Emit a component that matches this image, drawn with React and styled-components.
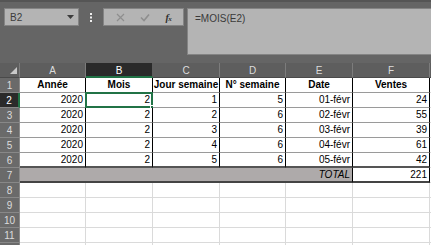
import React from "react";
import styled, { createGlobalStyle } from "styled-components";

const GlobalStyle = createGlobalStyle`
  html, body { margin: 0; padding: 0; background: #ffffff; overflow: hidden; }
  body { font-family: "Liberation Sans", Arial, sans-serif; }
  * { box-sizing: border-box; }
`;

const Page = styled.div`
  width: 431px;
  height: 245px;
  overflow: hidden;
  display: flex;
  flex-direction: column;
`;

const Toolbar = styled.div`
  height: 63px;
  flex: none;
  background: #656565;
  border-top: 2px solid #555555;
  display: flex;
  align-items: flex-start;
  padding: 6px 0 0 4px;
`;

const NameBox = styled.div`
  width: 75px;
  height: 18px;
  background: #b4b4b4;
  border: 1px solid #848484;
  display: flex;
  align-items: center;
  justify-content: space-between;
  padding: 0 4px 0 5px;
  font-size: 10px;
  color: #3c3c3c;
`;

const Dots = styled.div`
  width: 24px;
  height: 18px;
  display: flex;
  align-items: center;
  justify-content: center;
`;

const FxGroup = styled.div`
  width: 81px;
  height: 18px;
  background: #b4b4b4;
  border: 1px solid #848484;
  display: flex;
  align-items: center;
  justify-content: space-around;
  padding: 0 4px;
`;

const FxLabel = styled.span`
  font-family: "Liberation Serif", "Times New Roman", serif;
  font-style: italic;
  font-weight: bold;
  font-size: 10px;
  color: #2e2e2e;
  letter-spacing: -0.5px;
`;

const FxSub = styled.span`
  font-size: 7px;
`;

const FormulaInput = styled.div`
  margin-left: 3px;
  flex: 1;
  height: 47px;
  background: #b4b4b4;
  border: 1px solid #848484;
  border-right: none;
  font-size: 10px;
  color: #3a3a3a;
  padding: 4px 0 0 7px;
`;

const Sheet = styled.div`
  display: grid;
  grid-template-columns: 20px 66px 67px 67px 66px 67px 77px 20px;
  grid-auto-rows: 15px;
  font-size: 10px;
  color: #000;
`;

const Corner = styled.div`
  background: #5e5e5e;
  border-right: 1px solid #7c7c7c;
  border-bottom: 1px solid #4a4a4a;
  display: flex;
  align-items: flex-end;
  justify-content: flex-end;
  padding: 0 2px 3px 0;
`;

const ColHeader = styled.div`
  background: ${(p) => (p.$active ? "#2a2a2a" : "#5e5e5e")};
  color: ${(p) => (p.$active ? "#ffffff" : "#dcdcdc")};
  border-right: 1px solid ${(p) => (p.$active ? "#5e5e5e" : "#7c7c7c")};
  border-bottom: ${(p) => (p.$active ? "2px solid #217346" : "1px solid #4a4a4a")};
  display: flex;
  align-items: center;
  justify-content: center;
  font-size: 10px;
  padding-top: ${(p) => (p.$active ? "1px" : "0")};
`;

const RowHeader = styled.div`
  background: ${(p) => (p.$active ? "#2a2a2a" : "#6a6a6a")};
  color: ${(p) => (p.$active ? "#ffffff" : "#dcdcdc")};
  border-right: ${(p) => (p.$active ? "2px solid #217346" : "1px solid #8a8a8a")};
  border-bottom: 1px solid #888888;
  display: flex;
  align-items: center;
  justify-content: center;
  font-size: 10px;
`;

const Cell = styled.div`
  position: relative;
  grid-column: ${(p) => (p.$span ? `span ${p.$span}` : "auto")};
  background: ${(p) => p.$fill || "#ffffff"};
  border-right: 1px solid ${(p) => p.$v || "#dadada"};
  border-bottom: ${(p) => p.$hw || 1}px solid ${(p) => p.$h || "#dadada"};
  display: flex;
  align-items: center;
  justify-content: ${(p) =>
    p.$align === "center" ? "center" : p.$align === "right" ? "flex-end" : "flex-start"};
  padding: 0 2px;
  font-weight: ${(p) => (p.$bold ? "bold" : "normal")};
  font-style: ${(p) => (p.$italic ? "italic" : "normal")};
  white-space: nowrap;
  line-height: 1;
`;

const Selection = styled.div`
  position: absolute;
  left: -1px;
  top: -1px;
  right: -1px;
  bottom: -1px;
  border: 2px solid #217346;
  pointer-events: none;
`;

const FillHandle = styled.div`
  position: absolute;
  right: -4px;
  bottom: -4px;
  width: 5px;
  height: 5px;
  background: #217346;
  border: 1px solid #ffffff;
`;

const headers = ["Année", "Mois", "Jour semaine", "N° semaine", "Date", "Ventes"];
const data = [
  [2020, 2, 1, 5, "01-févr", 24],
  [2020, 2, 2, 6, "02-févr", 55],
  [2020, 2, 3, 6, "03-févr", 39],
  [2020, 2, 4, 6, "04-févr", 61],
  [2020, 2, 5, 6, "05-févr", 42],
];
const cols = ["A", "B", "C", "D", "E", "F"];

export default function App() {
  const rows = [];

  rows.push(
    <Corner key="corner">
      <svg width="7" height="7" viewBox="0 0 7 7">
        <polygon points="7,0 7,7 0,7" fill="#c9c9c9" />
      </svg>
    </Corner>
  );
  cols.forEach((c) =>
    rows.push(
      <ColHeader key={"h" + c} $active={c === "B"}>
        {c}
      </ColHeader>
    )
  );
  rows.push(<ColHeader key="hG" />);

  rows.push(<RowHeader key="r1">1</RowHeader>);
  headers.forEach((h, i) =>
    rows.push(
      <Cell key={"c1" + i} $align="center" $bold $v="#000" $h="#9a9a9a">
        {h}
      </Cell>
    )
  );
  rows.push(<Cell key="c1g" />);

  data.forEach((r, ri) => {
    const n = ri + 2;
    rows.push(
      <RowHeader key={"r" + n} $active={n === 2}>
        {n}
      </RowHeader>
    );
    r.forEach((v, ci) =>
      rows.push(
        <Cell
          key={`c${n}-${ci}`}
          $align="right"
          $v="#000"
          $h={n === 6 ? "#555" : "#9a9a9a"}
          $hw={n === 6 ? 2 : 1}
        >
          {v}
          {n === 2 && ci === 1 && (
            <Selection>
              <FillHandle />
            </Selection>
          )}
        </Cell>
      )
    );
    rows.push(<Cell key={`c${n}g`} />);
  });

  rows.push(<RowHeader key="r7">7</RowHeader>);
  rows.push(
    <Cell key="c7t" $span={5} $fill="#aeaaaa" $align="right" $italic $v="#000" $h="#444" $hw={2}>
      TOTAL
    </Cell>
  );
  rows.push(
    <Cell key="c7v" $align="right" $v="#000" $h="#444" $hw={2}>
      221
    </Cell>
  );
  rows.push(<Cell key="c7g" />);

  for (let n = 8; n <= 12; n++) {
    rows.push(<RowHeader key={"r" + n}>{n <= 11 ? n : ""}</RowHeader>);
    for (let c = 0; c < 7; c++) rows.push(<Cell key={`c${n}-${c}`} />);
  }

  return (
    <Page>
      <GlobalStyle />
      <Toolbar>
        <NameBox>
          <span>B2</span>
          <svg width="7" height="4" viewBox="0 0 7 4">
            <polygon points="0,0 7,0 3.5,4" fill="#3c3c3c" />
          </svg>
        </NameBox>
        <Dots>
          <svg width="2" height="9" viewBox="0 0 2 9">
            <rect x="0" y="0" width="2" height="2" fill="#eeeeee" />
            <rect x="0" y="3.5" width="2" height="2" fill="#eeeeee" />
            <rect x="0" y="7" width="2" height="2" fill="#eeeeee" />
          </svg>
        </Dots>
        <FxGroup>
          <svg width="9" height="9" viewBox="0 0 9 9">
            <path d="M1 1 L8 8 M8 1 L1 8" stroke="#8e8e8e" strokeWidth="1.2" />
          </svg>
          <svg width="10" height="9" viewBox="0 0 10 9">
            <path d="M1 4.5 L4 7.5 L9 1.5" stroke="#8e8e8e" strokeWidth="1.6" fill="none" />
          </svg>
          <FxLabel>
            f<FxSub>x</FxSub>
          </FxLabel>
        </FxGroup>
        <FormulaInput>=MOIS(E2)</FormulaInput>
      </Toolbar>
      <Sheet>{rows}</Sheet>
    </Page>
  );
}
